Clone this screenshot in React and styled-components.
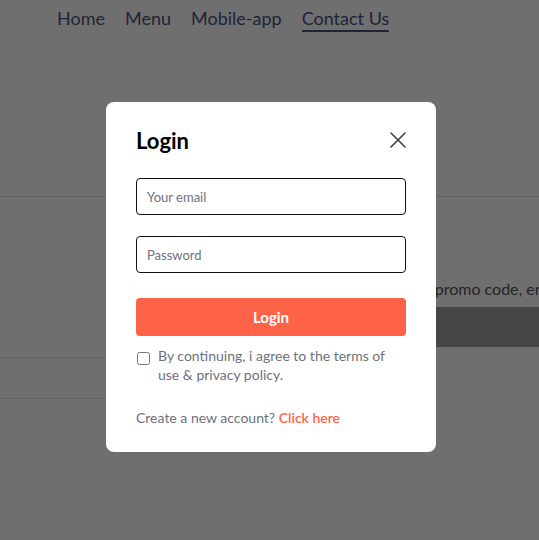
import React from 'react';
import styled, { createGlobalStyle } from 'styled-components';

const GlobalStyle = createGlobalStyle`
  body {
    margin: 0;
    background: #fff;
    font-family: Lato, "Noto Sans", sans-serif;
    overflow: hidden;
  }
`

const links = ['Home', 'Menu', 'Mobile-app', 'Contact Us'];

const App = () =>
  <Page>
    <GlobalStyle />
    <Navbar>
      {links.map(link =>
        <NavItem key={link} active={link === 'Contact Us'}>{link}</NavItem>
      )}
    </Navbar>
    <CartItems />
    <Divider />
    <CartBottom>
      <CartTotals>
        <TotalRow />
        <Divider />
        <TotalRow />
        <Divider />
      </CartTotals>
      <Promo>
        <PromoText>If you have a promo code, enter it here</PromoText>
        <PromoInput />
      </Promo>
    </CartBottom>
    <LoginPopup />
  </Page>

export default App;

const LoginPopup = () =>
  <Overlay>
    <Form onSubmit={e => e.preventDefault()}>
      <TitleRow>
        <Title>Login</Title>
        <CloseIcon />
      </TitleRow>
      <Inputs>
        <Input type="email" placeholder="Your email" />
        <Input type="password" placeholder="Password" />
      </Inputs>
      <Button type="submit">Login</Button>
      <Condition>
        <Checkbox type="checkbox" />
        <p>By continuing, i agree to the terms of use &amp; privacy policy.</p>
      </Condition>
      <Switch>
        Create a new account? <span>Click here</span>
      </Switch>
    </Form>
  </Overlay>

const CloseIcon = () =>
  <CloseSvg viewBox="0 0 16 16" fill="none" stroke="#404040" strokeWidth="1.6" strokeLinecap="round">
    <path d="M1 1 L15 15 M15 1 L1 15" />
  </CloseSvg>

const Page = styled.div`
  position: relative;
  height: 540px;
  overflow: hidden;
`

const Navbar = styled.ul`
  display: flex;
  gap: 20px;
  list-style: none;
  margin: 0;
  padding: 7px 0 0 57px;
  font-size: 18px;
  color: #49557e;
`

const NavItem = styled.li`
  line-height: 22px;
  padding-bottom: 1px;
  border-bottom: 2px solid ${p => p.active ? '#49557e' : 'transparent'};
`

const CartItems = styled.div`
  height: 164px;
`

const Divider = styled.hr`
  height: 1px;
  margin: 0;
  border: none;
  background: #e2e2e2;
`

const CartBottom = styled.div`
  display: flex;
  justify-content: space-between;
`

const CartTotals = styled.div`
  display: flex;
  flex-direction: column;
  width: 300px;
`

const TotalRow = styled.div`
  height: 40px;
  &:first-child {
    height: 160px;
  }
`

const Promo = styled.div`
  flex: 1;
  padding: 82px 0 0 42px;
  min-width: 0;
`

const PromoText = styled.p`
  margin: 0;
  font-size: 16px;
  line-height: 20px;
  color: #555;
  white-space: nowrap;
`

const PromoInput = styled.div`
  height: 40px;
  margin: 8px -20px 0 0;
  border-radius: 4px;
  background: #9e9e9e;
`

const Overlay = styled.div`
  position: absolute;
  inset: 0;
  display: flex;
  justify-content: center;
  align-items: flex-start;
  padding: 102px 0 0 3px;
  background: rgba(0, 0, 0, 0.565);
`

const Form = styled.form`
  display: flex;
  flex-direction: column;
  gap: 25px;
  width: 330px;
  box-sizing: border-box;
  padding: 25px 30px 26px;
  border-radius: 8px;
  background: #fff;
  color: #6e717c;
  font-size: 14px;
`

const TitleRow = styled.div`
  display: flex;
  justify-content: space-between;
  align-items: center;
  height: 26px;
`

const Title = styled.h2`
  margin: 0;
  font-size: 22px;
  font-weight: 700;
  color: #000;
`

const CloseSvg = styled.svg`
  width: 16px;
  height: 16px;
`

const Inputs = styled.div`
  display: flex;
  flex-direction: column;
  gap: 21px;
`

const Input = styled.input`
  height: 37px;
  box-sizing: border-box;
  padding: 0 10px;
  border: 1px solid #111;
  border-radius: 4px;
  font-family: inherit;
  font-size: 13px;
  outline: none;
  &::placeholder {
    color: #6e717c;
  }
`

const Button = styled.button`
  height: 38px;
  border: none;
  border-radius: 4px;
  background: #ff6347;
  color: #fff;
  font-family: inherit;
  font-size: 15px;
  font-weight: 700;
`

const Condition = styled.label`
  display: flex;
  align-items: flex-start;
  gap: 8px;
  margin-top: -15px;
  line-height: 19px;
  p {
    margin: 0;
  }
`

const Checkbox = styled.input`
  flex-shrink: 0;
  width: 13px;
  height: 13px;
  margin: 6px 0 0 1px;
`

const Switch = styled.p`
  margin: 0;
  line-height: 17px;
  span {
    color: #ff6347;
    font-weight: 600;
  }
`
